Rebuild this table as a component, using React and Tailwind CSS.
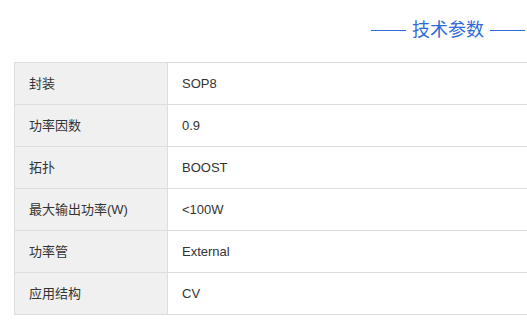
const rows = [
  ["封装", "SOP8"],
  ["功率因数", "0.9"],
  ["拓扑", "BOOST"],
  ["最大输出功率(W)", "<100W"],
  ["功率管", "External"],
  ["应用结构", "CV"],
];

const App = () => {
  return (
    <div
      className="w-[527px] h-[327px] overflow-hidden bg-white"
      style={{ fontFamily: '"Liberation Sans", "Noto Sans CJK SC", sans-serif' }}
    >
      <div className="flex justify-end pr-[2px] pt-[16px] h-[62px]">
        <div className="flex items-center gap-[6px] h-[24px]">
          <span className="w-[35px] h-px bg-[#2f6bd6] mt-[4px]"></span>
          <h3
            className="text-[18px] leading-[24px] text-[#2f6bd6] font-normal"
            style={{ fontFamily: '"Noto Sans CJK SC", sans-serif' }}
          >
            技术参数
          </h3>
          <span className="w-[35px] h-px bg-[#2f6bd6] mt-[4px]"></span>
        </div>
      </div>
      <div className="ml-[14px] border-t border-l border-[#dddddd]">
        {rows.map((r, i) => (
          <div key={i} className="flex h-[42px] border-b border-[#dddddd]">
            <div className="w-[153px] shrink-0 bg-[#f0f0f0] border-r border-[#dddddd] pl-[14px] flex items-center text-[13px] text-[#333333]">
              {r[0]}
            </div>
            <div className="flex-1 pl-[14px] flex items-center text-[13px] text-[#333333]">
              {r[1]}
            </div>
          </div>
        ))}
      </div>
    </div>
  );
};

export default App;
